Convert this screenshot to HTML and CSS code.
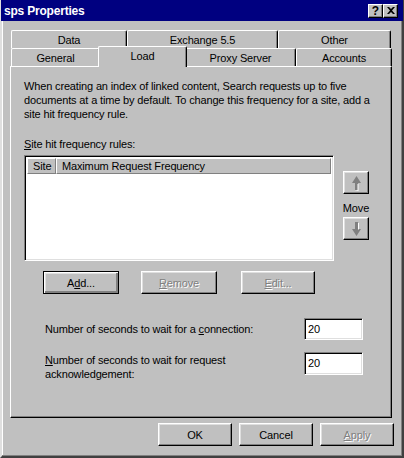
FILE: index.html
```html
<!DOCTYPE html>
<html>
<head>
<meta charset="utf-8">
<link rel="stylesheet" href="styles.css">
</head>
<body>
<div class="window">
  <div class="titlebar">
    <span class="title">sps Properties</span>
    <div class="tbtns">
      <div class="tbtn help">?</div>
      <div class="tbtn close"><svg width="8" height="7" viewBox="0 0 8 7"><path d="M0 0h2l2 2 2-2h2L5 3.5 8 7H6L4 5 2 7H0l3-3.5z" fill="#000"/></svg></div>
    </div>
  </div>
  <div class="tabs">
    <div class="tabrow back">
      <div class="tab w-data">Data</div>
      <div class="tab w-exch">Exchange 5.5</div>
      <div class="tab w-other">Other</div>
    </div>
    <div class="tabrow front">
      <div class="tab w-gen">General</div>
      <div class="tab active w-load">Load</div>
      <div class="tab w-proxy">Proxy Server</div>
      <div class="tab w-acc">Accounts</div>
    </div>
  </div>
  <div class="panel">
    <p class="intro">When creating an index of linked content, Search requests up to five documents at a time by default. To change this frequency for a site, add a site hit frequency rule.</p>
    <div class="label"><u>S</u>ite hit frequency rules:</div>
    <div class="listrow">
      <div class="listbox">
        <div class="lhead">
          <div class="hcell c-site">Site</div>
          <div class="hcell c-max">Maximum Request Frequency</div>
        </div>
      </div>
      <div class="movecol">
        <div class="btn arrowbtn">
          <svg width="11" height="16" viewBox="0 0 11 16"><path d="M5.5 1L10 8H7v7H4V8H1z" fill="#808080"/><path d="M7 9v7H4.5" stroke="#fff" fill="none"/></svg>
        </div>
        <div class="movelbl">Move</div>
        <div class="btn arrowbtn">
          <svg width="11" height="16" viewBox="0 0 11 16"><path d="M4 1h3v7h3l-4.5 7L1 8h3z" fill="#808080"/><path d="M7.5 2v6.5" stroke="#fff" fill="none"/></svg>
        </div>
      </div>
    </div>
    <div class="actions">
      <div class="btn default">A<u>d</u>d...</div>
      <div class="btn disabled"><u>R</u>emove</div>
      <div class="btn disabled"><u>E</u>dit...</div>
    </div>
    <div class="field conn">
      <div class="flabel">Number of seconds to wait for a <u>c</u>onnection:</div>
      <div class="input">20</div>
    </div>
    <div class="field req">
      <div class="flabel"><u>N</u>umber of seconds to wait for request<br>acknowledgement:</div>
      <div class="input">20</div>
    </div>
  </div>
  <div class="footer">
    <div class="btn">OK</div>
    <div class="btn">Cancel</div>
    <div class="btn disabled"><u>A</u>pply</div>
  </div>
</div>
</body>
</html>
```
FILE: styles.css
```css
* { box-sizing: border-box; }
html, body { margin: 0; padding: 0; background: #c0c0c0; }
body { font-family: "Liberation Sans", Arial, sans-serif; font-size: 11px; letter-spacing: -0.15px; color: #000; }

.window {
  width: 404px; height: 458px;
  background: #c0c0c0;
  border-style: solid;
  border-width: 0 2px 2px 2px;
  border-color: #dfdfdf #404040 #404040 #dfdfdf;
  box-shadow: inset -1px -1px #808080, inset 1px 0 #fff;
  display: flex; flex-direction: column;
}

.titlebar {
  height: 21px; margin: 0 -1px 0 -1px;
  background: #000080;
  display: flex; align-items: center; justify-content: space-between;
  padding: 0 5px 0 3px;
}
.title { color: #fff; font-weight: bold; font-size: 12px; letter-spacing: -0.2px; }
.tbtns { display: flex; }
.tbtn {
  width: 15px; height: 14px;
  background: #c0c0c0;
  border: 1px solid; border-color: #fff #000 #000 #fff;
  box-shadow: inset -1px -1px #808080;
  display: flex; align-items: center; justify-content: center;
  font-weight: bold; font-size: 12px; line-height: 1; letter-spacing: 0;
}

.tabs { margin: 9px 0 0 9px; }
.tabrow { display: flex; }
.tabrow.back { height: 18px; }
.tabrow.front { height: 18px; position: relative; z-index: 1; }
.tab {
  border-top: 1px solid #fff; border-left: 1px solid #fff;
  border-right: 1px solid #000;
  box-shadow: inset -1px 0 #808080;
  border-radius: 2px 2px 0 0;
  display: flex; align-items: center; justify-content: center;
  padding-top: 1px;
}
.w-data { width: 116px; }
.w-exch { width: 151px; }
.w-other { width: 113px; }
.w-gen { width: 89px; }
.w-load { width: 89px; }
.w-proxy { width: 111px; }
.w-acc { width: 96px; }
.tab.active {
  margin: -2px -2px 0 -2px;
  height: 21px;
  background: #c0c0c0;
  position: relative; z-index: 2;
  padding-bottom: 3px;
}

.panel {
  margin-left: 8px; width: 382px; height: 352px;
  border: 1px solid; border-color: #fff #000 #000 #fff;
  box-shadow: inset -1px -1px #808080;
  padding: 0 0 0 13px;
}
.intro { margin: 12px 0 0 0; line-height: 14px; width: 346px; }
.label { margin-top: 16px; line-height: 14px; }

.listrow { display: flex; margin-top: 4px; }
.listbox {
  width: 310px; height: 106px; background: #fff;
  border: 1px solid; border-color: #808080 #fff #fff #808080;
  box-shadow: inset 1px 1px #000, inset -1px -1px #dfdfdf;
  padding: 2px;
}
.lhead { display: flex; height: 16px; }
.hcell {
  background: #c0c0c0;
  border: 1px solid; border-color: #fff #808080 #808080 #fff;
  padding-left: 5px; line-height: 14px;
}
.c-site { width: 29px; }
.c-max { flex: 1; }

.movecol { margin-left: 9px; width: 26px; padding-top: 16px; display: flex; flex-direction: column; align-items: center; }
.arrowbtn { width: 26px; height: 23px; }
.movelbl { line-height: 14px; margin: 7px 0 2px; }

.btn {
  background: #c0c0c0;
  border: 1px solid; border-color: #fff #000 #000 #fff;
  box-shadow: inset -1px -1px #808080, inset 1px 1px #dfdfdf;
  display: flex; align-items: center; justify-content: center;
}
.btn.disabled { color: #808080; text-shadow: 1px 1px #fff; }
.btn.default { border: 1px solid #000; box-shadow: inset 1px 1px #fff, inset -2px -2px #808080, inset 2px 2px #dfdfdf; }

.actions { display: flex; margin: 10px 0 0 19px; gap: 22px; }
.actions .btn { width: 76px; height: 23px; }
.actions .btn:last-child { margin-left: 2px; width: 74px; }

.field { display: flex; justify-content: space-between; align-items: center; margin-left: 21px; width: 318px; }
.field.conn { margin-top: 24px; }
.field.req { margin-top: 12px; align-items: flex-start; }
.flabel { line-height: 14px; }
.field.req .flabel { margin-top: 1px; }
.input {
  width: 59px; height: 22px; background: #fff;
  border: 1px solid; border-color: #808080 #fff #fff #808080;
  box-shadow: inset 1px 1px #000, inset -1px -1px #dfdfdf;
  padding: 3px 0 0 3px; line-height: 14px;
}
.field.req .input { height: 23px; }

.footer { display: flex; justify-content: flex-end; gap: 7px; padding: 5px 8px 0 0; }
.footer .btn { width: 74px; height: 23px; }
```
